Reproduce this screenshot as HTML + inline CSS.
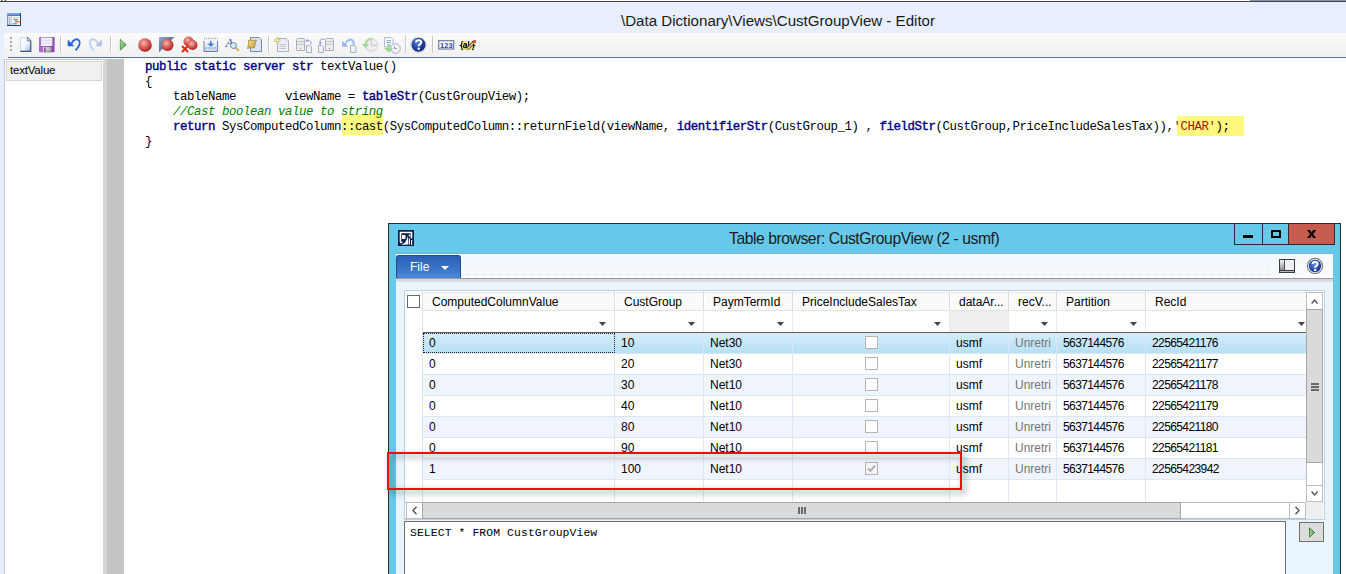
<!DOCTYPE html>
<html><head><meta charset="utf-8">
<style>
*{margin:0;padding:0;box-sizing:border-box}
html,body{width:1346px;height:574px;overflow:hidden;background:#E8EEFC;position:relative;font-family:"Liberation Sans",sans-serif}
.a{position:absolute}
.code{font-family:"Liberation Mono",monospace;font-size:12.4px;letter-spacing:-0.44px;line-height:15px;white-space:pre;color:#000}
.kw{color:#00007F;-webkit-text-stroke:0.4px #00007F}
.cm{color:#008000;font-style:italic}
.st{color:#A31515}
.hl{background:#FAF58C}
.hd{font-size:12px;color:#000;white-space:nowrap}
.td{font-size:12px;color:#000;white-space:nowrap}
.num{letter-spacing:-0.6px}
.sql{font-family:"Liberation Mono",monospace;font-size:11.4px;letter-spacing:0.1px;white-space:pre;color:#000}
</style></head><body>
<!-- top strip -->
<div class="a" style="left:0;top:0;width:1346px;height:1px;background:#fff"></div>
<div class="a" style="left:1250px;top:0;width:96px;height:1px;background:#8A90A8"></div>
<div class="a" style="left:1px;top:0;width:1px;height:1px;background:#B05A10"></div><div class="a" style="left:6px;top:0;width:1px;height:1px;background:#C0F0F8"></div><div class="a" style="left:2px;top:0;width:1px;height:1px;background:#60A8E0"></div><div class="a" style="left:4px;top:0;width:1px;height:1px;background:#F0E0A0"></div><div class="a" style="left:5px;top:0;width:1px;height:1px;background:#6A2A8A"></div>
<div class="a" style="left:0;top:1px;width:1346px;height:1px;background:#454545"></div>
<!-- title -->
<div class="a" style="left:621px;top:12px;font-size:15.1px;color:#1a1a1a;white-space:nowrap">\Data Dictionary\Views\CustGroupView - Editor</div>
<svg class="a" style="left:7px;top:13px" width="14" height="14"><defs><linearGradient id="eh" x1="0" y1="0" x2="0" y2="1"><stop offset="0" stop-color="#8AB0F0"/><stop offset="1" stop-color="#3A68CC"/></linearGradient></defs><rect x="0" y="0" width="14" height="13" fill="#2A3E6A"/><rect x="0" y="0" width="13" height="12" fill="#7C98C8"/><rect x="0.5" y="0.5" width="12.5" height="2.5" fill="url(#eh)"/><rect x="1" y="3" width="3" height="8.5" fill="#DCE4F0"/><g fill="#6A80A8"><circle cx="2.5" cy="4.8" r="0.6"/><circle cx="2.5" cy="6.8" r="0.6"/><circle cx="2.5" cy="8.8" r="0.6"/><circle cx="2.5" cy="10.8" r="0.6"/></g><rect x="4.5" y="3" width="8.5" height="9" fill="#fff"/><path d="M6 4.8 H12" stroke="#7888A8" stroke-width="0.8" stroke-dasharray="0.8 0.4"/><path d="M6.5 6.8 H11" stroke="#2A9A2A" stroke-width="1.1"/><path d="M8 8.8 H12.5" stroke="#E04014" stroke-width="1.1"/><path d="M5.5 10.8 H10" stroke="#2A8AE8" stroke-width="1.1"/></svg>
<!-- toolbar -->
<div class="a" style="left:4px;top:33px;width:1342px;height:25px;background:linear-gradient(#FBFBFB,#F0F0F0);border-top-left-radius:3px"></div>
<svg class="a" style="left:0;top:30px" width="490" height="28" viewBox="0 30 490 28">
<defs>
<radialGradient id="rb" cx="0.4" cy="0.35" r="0.68"><stop offset="0" stop-color="#F6B8B0"/><stop offset="0.45" stop-color="#DC6A64"/><stop offset="0.85" stop-color="#B83030"/><stop offset="1" stop-color="#8A1818"/></radialGradient><linearGradient id="pg" x1="0" y1="0" x2="1" y2="1"><stop offset="0" stop-color="#B8E4A8"/><stop offset="1" stop-color="#3E9A3E"/></linearGradient><linearGradient id="sq" x1="0" y1="0" x2="1" y2="1"><stop offset="0" stop-color="#98A8C4"/><stop offset="1" stop-color="#2A3E62"/></linearGradient>
<linearGradient id="doc" x1="0" y1="0" x2="1" y2="1"><stop offset="0" stop-color="#fff"/><stop offset="1" stop-color="#C9D9F0"/></linearGradient>
<linearGradient id="gry" x1="0" y1="0" x2="0" y2="1"><stop offset="0" stop-color="#F4F4F4"/><stop offset="1" stop-color="#D0D0D0"/></linearGradient>
<radialGradient id="hb" cx="0.4" cy="0.35" r="0.7"><stop offset="0" stop-color="#5C82D8"/><stop offset="0.6" stop-color="#1F3FA0"/><stop offset="1" stop-color="#0E2470"/></radialGradient>
</defs>
<!-- grip -->
<g fill="#A8A8A8"><rect x="10" y="37" width="2" height="2"/><rect x="10" y="41" width="2" height="2"/><rect x="10" y="45" width="2" height="2"/><rect x="10" y="49" width="2" height="2"/></g>
<!-- new doc -->
<defs><linearGradient id="nd" x1="0" y1="0" x2="1" y2="1"><stop offset="0" stop-color="#FFFFFF"/><stop offset="0.55" stop-color="#EEF4FE"/><stop offset="1" stop-color="#86ACEE"/></linearGradient><linearGradient id="sv" x1="0" y1="0" x2="1" y2="0"><stop offset="0" stop-color="#B070D0"/><stop offset="1" stop-color="#8E48B0"/></linearGradient><linearGradient id="sh" x1="0" y1="0" x2="1" y2="1"><stop offset="0" stop-color="#F4F4F4"/><stop offset="1" stop-color="#8A8A8A"/></linearGradient></defs>
<path d="M20 37.2 H27.5 L31 40.7 V51.8 H20 Z" fill="url(#nd)"/><path d="M20.4 51.5 V37.6 H27.5" stroke="#C4D0E0" stroke-width="0.9" fill="none"/><path d="M27.5 37.4 L30.8 40.7 V51.4 H20.4" stroke="#405274" stroke-width="1.1" fill="none"/><path d="M27.3 37.5 V40.8 H30.7" stroke="#6A7C98" stroke-width="0.9" fill="#E0E8F4"/>
<!-- save -->
<rect x="39" y="37" width="15.6" height="15.3" rx="1" fill="url(#sv)"/><rect x="41" y="37.6" width="11.3" height="8.4" fill="#F0F2F6"/><path d="M41 40.3 H52.3 M41 43 H52.3" stroke="#D4D8E0" stroke-width="0.9"/><rect x="43" y="47.2" width="8" height="5.1" fill="url(#sh)"/><rect x="44" y="47.6" width="1.6" height="4.5" fill="#8E48B0"/>
<!-- sep -->
<rect x="60" y="36" width="1" height="17" fill="#C8C8C8"/><rect x="61" y="36" width="1" height="17" fill="#fff"/>
<!-- undo -->
<path d="M71.5 43.8 C73 39.5, 77 38, 79 40.5 C80.6 42.6, 79.6 46.6, 75.5 50.3" stroke="#2D68D8" stroke-width="1.9" fill="none"/><path d="M67.7 39.6 L67.7 46.2 L74.3 46.2 Z" fill="#2A62D0"/>
<path d="M98 43.8 C96.5 39.5, 92.5 38, 90.5 40.5 C88.9 42.6, 89.9 46.6, 94 50.3" stroke="#BCD0F0" stroke-width="1.9" fill="none"/><path d="M101.8 39.6 L101.8 46.2 L95.2 46.2 Z" fill="#B0C4E8"/>
<!-- sep -->
<rect x="110" y="36" width="1" height="17" fill="#C8C8C8"/><rect x="111" y="36" width="1" height="17" fill="#fff"/>
<!-- play -->
<path d="M120.3 39.3 L126.2 44.7 L120.3 50.2 Z" fill="url(#pg)" stroke="#3A7A3A" stroke-width="0.7"/>
<!-- red ball -->
<circle cx="145" cy="45" r="6.8" fill="url(#rb)"/>
<!-- square+ball -->
<path d="M159 37 H174.5 L159 52.3 Z" fill="url(#sq)"/><circle cx="167.5" cy="45" r="6" fill="url(#rb)"/>
<!-- two balls + x -->
<circle cx="188.5" cy="41.5" r="5" fill="url(#rb)"/><circle cx="192.5" cy="45" r="5" fill="url(#rb)"/><path d="M182 46 L188 52 M188 46 L182 52" stroke="#F02010" stroke-width="2"/>
<!-- insert table -->
<defs><linearGradient id="itb" x1="0" y1="0" x2="0" y2="1"><stop offset="0" stop-color="#F4F8FE"/><stop offset="1" stop-color="#C4D4EC"/></linearGradient><linearGradient id="scr" x1="0" y1="0" x2="1" y2="1"><stop offset="0" stop-color="#F8E8A0"/><stop offset="1" stop-color="#C0982A"/></linearGradient></defs>
<path d="M204 41 V51.5 H217.5 V41" fill="url(#itb)" stroke="#6E7E9C"/><path d="M204 38.5 H218" stroke="#9AA4B8" stroke-width="1.6" stroke-dasharray="1 1.2"/><path d="M205.5 48 H216.5" stroke="#7888A8" stroke-width="1.2" stroke-dasharray="1.6 1.4"/><path d="M210.8 41 V44" stroke="#3A78E0" stroke-width="1.4"/><path d="M207.3 43.5 H214.3 L210.8 46.8 Z" fill="#3A78E0"/>
<!-- find A -->
<text x="225.5" y="46.5" font-family="Liberation Serif" font-style="italic" font-size="12.5" fill="#2E4EB0">A</text><path d="M235.5 47.5 L238.8 51" stroke="#C8A848" stroke-width="1.8"/><circle cx="233.5" cy="45.5" r="3" fill="#D4EAF8" stroke="#5A88B8" stroke-width="1"/>
<!-- scroll doc -->
<path d="M250.5 37.5 H259 L261.5 40 V51.5 H250.5 Z" fill="#DCE6F6" stroke="#7888A8"/><path d="M248.5 40.5 C251 39.5, 253 41, 256.5 40 C255.5 42, 255 44, 254.5 47.5 C252 48.5, 250 47, 247.5 48.5 C248.5 46, 248.5 43, 248.5 40.5 Z" fill="url(#scr)" stroke="#9A7A20" stroke-width="0.7"/>
<!-- sep -->
<rect x="268" y="36" width="1" height="17" fill="#C8C8C8"/><rect x="269" y="36" width="1" height="17" fill="#fff"/>
<!-- add doc disabled -->
<path d="M277.5 38.5 H286 L288.5 41 V51.5 H277.5 Z" fill="#EFF1F6" stroke="#A8B2C4"/><path d="M286 38.5 V41 H288.5" fill="#fff" stroke="#B8C0D0" stroke-width="0.7"/><path d="M279.5 44.5 H286 M279.5 46.5 H286 M279.5 48.5 H286" stroke="#B0B8C8" stroke-width="0.8"/><path d="M277.3 37.5 V43.5 M274.3 40.5 H280.3" stroke="#A8A8A0" stroke-width="2.6"/><path d="M277.3 37.8 V43.2 M274.6 40.5 H280" stroke="#F4EE80" stroke-width="1.6"/>
<!-- server/doc -->
<path d="M296.5 39.5 L297.5 38.5 H304 L304.5 39.5 V50.5 H296.5 Z" fill="#ECEEF2" stroke="#A8B0BC"/><path d="M297 41.5 H304 M297 44.3 H304" stroke="#B8B8B8" stroke-width="0.8"/><rect x="300" y="48" width="1" height="1" fill="#F06060"/><path d="M306.5 45.5 H310 L311.5 47 V52.5 H306.5 Z" fill="#F0F2F8" stroke="#A8B0BC"/><path d="M311 44.5 V42.5 C311 41, 309 40.5, 307 40.5" stroke="#9A90D0" stroke-width="1" fill="none"/><path d="M305.5 40.5 L307.8 38.8 V42.2 Z" fill="#9A90D0"/>
<path d="M318.5 45.5 H322 L323.5 47 V52.5 H318.5 Z" fill="#F0F2F8" stroke="#A8B0BC"/><path d="M324.5 39.2 H322 C320.8 39.2, 320.2 40, 320.2 41.5 V43" stroke="#9A90D0" stroke-width="1" fill="none"/><path d="M318.5 42.5 H322 L320.2 45 Z" fill="#9A90D0"/><path d="M325.5 39.5 L326.5 38.5 H333 L333.5 39.5 V50.5 H325.5 Z" fill="#ECEEF2" stroke="#A8B0BC"/><path d="M326 41.5 H333 M326 44.3 H333" stroke="#B8B8B8" stroke-width="0.8"/><rect x="329" y="48" width="1" height="1" fill="#F06060"/>
<!-- undo doc -->
<path d="M345 45 C346 40.5, 350 38.5, 352.5 40.5 C354 41.8, 354 43.5, 353.5 45" stroke="#A8C0EC" stroke-width="2.2" fill="none"/><path d="M342.2 40.8 L342.2 46.8 L348.2 46.8 Z" fill="#98B4E8"/><path d="M350.5 45.5 H354.5 L356 47 V52.5 H350.5 Z" fill="#EEF2FA" stroke="#A8B0BC"/>
<!-- clock green -->
<circle cx="371.3" cy="45" r="6.3" fill="#EDEDED" stroke="#D0D0D0"/><path d="M371.3 39.8 V45.2 H376" stroke="#C4C4C4" stroke-width="0.9" fill="none"/><path d="M372.5 38.6 C368.5 38.6, 366 41, 365.5 44.5" stroke="#A8E0A0" stroke-width="2.4" fill="none"/><path d="M362 44 L369 44 L365.5 48 Z" fill="#98D890"/>
<!-- doc clock -->
<path d="M384.5 37.5 H391 L393 39.5 V47 H384.5 Z" fill="#F6F8FC" stroke="#B4BCCC"/><path d="M386.5 40.5 H391 M386.5 42.5 H391" stroke="#7AA0E0" stroke-width="0.9"/><circle cx="395.5" cy="48.5" r="4.8" fill="#F2F2FA" stroke="#B0A8D8"/><path d="M394.5 46 V48.5 H397" stroke="#9088B8" fill="none" stroke-width="0.9"/><rect x="387.2" y="44" width="3.6" height="4.5" fill="#A8D8A0"/><path d="M384 48 H393.5 L388.8 52.5 Z" fill="#A0D498"/>
<!-- sep -->
<rect x="405" y="36" width="1" height="17" fill="#C8C8C8"/><rect x="406" y="36" width="1" height="17" fill="#fff"/>
<!-- help -->
<circle cx="418.5" cy="44.7" r="7.6" fill="none" stroke="#A8A8A8" stroke-width="1" stroke-dasharray="1 1"/><circle cx="418.5" cy="44.7" r="7" fill="url(#hb)"/><path d="M416 42.2 C416 39.5, 421.3 39.5, 421.3 42.2 C421.3 44, 418.7 44.3, 418.7 46.3" stroke="#fff" stroke-width="2" fill="none"/><rect x="417.6" y="47.6" width="2.2" height="2.2" fill="#fff"/>
<!-- sep -->
<rect x="432" y="36" width="1" height="17" fill="#C8C8C8"/><rect x="433" y="36" width="1" height="17" fill="#fff"/>
<!-- 123 -->
<rect x="438.7" y="40.7" width="15" height="8.3" fill="#fff" stroke="#7A84A8" stroke-width="1.3"/><text x="446.3" y="47.6" font-family="Liberation Sans" font-weight="bold" font-size="7.6" fill="#2848B0" text-anchor="middle">123</text>
<!-- {ab} pencil -->
<rect x="461.5" y="41" width="11.5" height="9" fill="#EEEA64"/><g stroke="#111" stroke-width="1.1" fill="none"><path d="M462.9 41.2 C461.7 41.2, 461.6 42, 461.6 43.4 V44.8 L460.3 45.5 L461.6 46.2 V47.6 C461.6 49, 461.7 49.8, 462.9 49.8"/><path d="M472.1 41.2 C473.3 41.2, 473.4 42, 473.4 43.4 V44.8 L474.7 45.5 L473.4 46.2 V47.6 C473.4 49, 473.3 49.8, 472.1 49.8"/><path d="M463.7 43.6 H465.6 C466.4 43.6, 466.6 44.2, 466.6 45 V47.8"/><ellipse cx="464.9" cy="46.3" rx="1.5" ry="1.3"/><path d="M468.6 41 V47.8"/></g><path d="M466.9 49.2 L473.4 42.7" stroke="#2A2A20" stroke-width="3"/><path d="M466.9 49.2 L473.4 42.7" stroke="#EED888" stroke-width="1.5"/><path d="M465.8 50.2 L467.2 48.6" stroke="#C8C8D8" stroke-width="1.2"/><circle cx="474.6" cy="41.6" r="1.8" fill="#D25844"/>
</svg>

<div class="a" style="left:8px;top:57px;width:1338px;height:1px;background:#5A6EA0"></div>
<!-- left panel -->
<div class="a" style="left:4px;top:58px;width:1342px;height:1px;background:#F7F6F0"></div>
<div class="a" style="left:4px;top:59px;width:99px;height:515px;background:#fff;border-left:1px solid #C8C8C8;border-top:1px solid #C8C8C8"></div>
<div class="a" style="left:6px;top:61px;width:96px;height:20px;background:#F0F0F0;border:1px solid #D4D4D4"></div>
<div class="a" style="left:10px;top:64px;font-size:11.5px;letter-spacing:-0.2px;color:#000">textValue</div>
<div class="a" style="left:103px;top:59px;width:4px;height:515px;background:#D4D4D4"></div>
<div class="a" style="left:107px;top:59px;width:17px;height:515px;background:#C4C4C4"></div>
<div class="a" style="left:124px;top:58px;width:1222px;height:516px;background:#fff"></div>
<!-- code -->
<div class="a" style="left:342px;top:114px;width:41px;height:21px;background:#FFF980"></div>
<div class="a" style="left:1177px;top:116px;width:67px;height:20px;background:#FFF980"></div>
<div class="a code" style="left:145px;top:60px"><span class="kw">public static server str</span> textValue()
{
    tableName       viewName = <span class="kw">tableStr</span>(CustGroupView);
    <span class="cm">//Cast boolean value to string</span>
    <span class="kw">return</span> SysComputedColumn::cast(SysComputedColumn::returnField(viewName, <span class="kw">identifierStr</span>(CustGroup_1) , <span class="kw">fieldStr</span>(CustGroup,PriceIncludeSalesTax)),<span class="st">'CHAR'</span>);
}</div>
<div class="a" style="left:388px;top:223px;width:953px;height:360px;background:#66C9EA;border:1px solid #2B2B2B"></div>
<div class="a" style="left:729px;top:230px;font-size:15.7px;letter-spacing:-0.44px;color:#1b1b1b;white-space:nowrap">Table browser: CustGroupView (2 - usmf)</div>
<div class="a" style="left:1234px;top:224px;width:101px;height:21px;border:1px solid #2B2B2B;border-top:none;background:#66C9EA"></div>
<div class="a" style="left:1262px;top:223px;width:1px;height:21px;background:#2B2B2B"></div>
<div class="a" style="left:1288px;top:223px;width:1px;height:21px;background:#2B2B2B"></div>
<div class="a" style="left:1289px;top:224px;width:45px;height:20px;background:#C75B50"></div>
<div class="a" style="left:1243px;top:235px;width:10px;height:3px;background:#000"></div>
<div class="a" style="left:1271px;top:230px;width:10px;height:8px;border:2px solid #000"></div>
<svg class="a" style="left:1307px;top:230px" width="10" height="8"><path d="M0 0 H3 L4.6 2.6 L6.2 0 H9.2 L6.1 4 L9.2 8 H6.2 L4.6 5.4 L3 8 H0 L3.1 4 Z" fill="#000"/></svg>
<svg class="a" style="left:398px;top:230px" width="16" height="16"><rect width="16" height="16" fill="#061A4C"/><path d="M2.5 12 V2.5 H13.5 V8.5" stroke="#fff" stroke-width="1.6" fill="none"/><path d="M2 12.5 H4.5" stroke="#fff" stroke-width="1.4"/><rect x="4" y="5" width="3.5" height="4" fill="#fff"/><path d="M3 15 C6 14, 8.5 12, 10 5.5 L10.5 14.5 Z" fill="#fff"/><rect x="11" y="8.5" width="1" height="6" fill="#fff"/><rect x="13" y="10" width="1.2" height="5" fill="#fff"/><circle cx="11.5" cy="5.5" r="0.9" fill="#fff"/></svg>
<div class="a" style="left:396px;top:254px;width:937px;height:320px;background:#EAF4FC"></div>
<div class="a" style="left:396px;top:253px;width:937px;height:1px;background:#7FAFCB"></div>
<div class="a" style="left:396px;top:254px;width:937px;height:24px;background:linear-gradient(#F2F8FE,#FBFDFF)"></div>
<div class="a" style="left:461px;top:256px;width:810px;height:20px;background:conic-gradient(#E4F1FC 25%,#FFFFFF 0 50%,#E4F1FC 0 75%,#FFFFFF 0) 0 0/2px 2px;opacity:0.8"></div>
<div class="a" style="left:396px;top:278px;width:937px;height:1px;background:#9A9A9A"></div>
<div class="a" style="left:396px;top:279px;width:937px;height:3px;background:linear-gradient(#D6DADE,#DCE0E6)"></div>
<div class="a" style="left:396px;top:255px;width:65px;height:23px;background:linear-gradient(#2D5FB4,#3B74C8 60%,#4C8ADC);border:1px solid #1E4B9A;border-bottom:none;border-radius:3px 3px 0 0"></div>
<div class="a" style="left:410px;top:260px;font-size:12px;letter-spacing:0px;color:#fff">File</div>
<svg class="a" style="left:441px;top:266px" width="9" height="5"><path d="M0 0 H8 L4 4 Z" fill="#fff"/></svg>
<div class="a" style="left:1279px;top:259px;width:16px;height:14px;border:1px solid #3C4046;background:#F0F0F0"></div>
<div class="a" style="left:1280px;top:260px;width:4px;height:10px;background:linear-gradient(#F4F4F4,#8E9094)"></div><div class="a" style="left:1284px;top:260px;width:1px;height:10px;background:#4A4E54"></div>
<div class="a" style="left:1280px;top:270px;width:14px;height:2px;background:#B4B8BC;border-top:1px solid #3C4046"></div>
<svg class="a" style="left:1306px;top:257px" width="18" height="18"><defs><radialGradient id="hb2" cx="0.45" cy="0.4" r="0.7"><stop offset="0" stop-color="#6A90E0"/><stop offset="0.6" stop-color="#2446B0"/><stop offset="1" stop-color="#10287A"/></radialGradient></defs><circle cx="9" cy="9" r="7.6" fill="#fff" stroke="#7A7A7A" stroke-width="1.2"/><circle cx="9" cy="9" r="6.2" fill="url(#hb2)"/><path d="M6.6 6.9 C6.6 4.3, 11.6 4.3, 11.6 6.9 C11.6 8.7, 9.2 8.9, 9.2 10.8" stroke="#fff" stroke-width="2" fill="none"/><rect x="8.1" y="11.9" width="2.2" height="2.2" fill="#fff"/></svg>
<div class="a" style="left:404px;top:290px;width:921px;height:230px;background:#fff;border:1px solid #BCD0E8"></div>
<div class="a" style="left:405px;top:291px;width:17px;height:211px;background:#FFFFFF"></div>
<div class="a" style="left:422px;top:291px;width:1px;height:211px;background:#D8E3F0"></div>
<div class="a" style="left:407px;top:295px;width:13px;height:13px;border:1px solid #6A6A6A;background:#fff"></div>
<div class="a" style="left:422px;top:292px;width:884px;height:18px;background:#FAFAFA;border-top:1px solid #E6E6E6;border-left:1px solid #E0E0E0"></div>
<div class="a" style="left:423px;top:310px;width:883px;height:1px;background:#E4E4E4"></div>
<div class="a" style="left:423px;top:311px;width:883px;height:21px;background:#fff"></div>
<div class="a" style="left:950px;top:311px;width:58px;height:21px;background:#EEEEEE"></div>
<div class="a" style="left:423px;top:332px;width:883px;height:1px;background:#5E5E5E"></div>
<div class="a" style="left:423px;top:333px;width:883px;height:20px;background:linear-gradient(#D5EDFA,#B6E0F6)"></div>
<div class="a" style="left:423px;top:353px;width:883px;height:1px;background:#DDE7F4"></div>
<div class="a" style="left:423px;top:354px;width:883px;height:20px;background:#fff"></div>
<div class="a" style="left:423px;top:374px;width:883px;height:1px;background:#DDE7F4"></div>
<div class="a" style="left:423px;top:375px;width:883px;height:20px;background:#F0F5FD"></div>
<div class="a" style="left:423px;top:395px;width:883px;height:1px;background:#DDE7F4"></div>
<div class="a" style="left:423px;top:396px;width:883px;height:20px;background:#fff"></div>
<div class="a" style="left:423px;top:416px;width:883px;height:1px;background:#DDE7F4"></div>
<div class="a" style="left:423px;top:417px;width:883px;height:20px;background:#F0F5FD"></div>
<div class="a" style="left:423px;top:437px;width:883px;height:1px;background:#DDE7F4"></div>
<div class="a" style="left:423px;top:438px;width:883px;height:20px;background:#fff"></div>
<div class="a" style="left:423px;top:458px;width:883px;height:1px;background:#DDE7F4"></div>
<div class="a" style="left:423px;top:459px;width:883px;height:20px;background:#F0F5FD"></div>
<div class="a" style="left:423px;top:479px;width:883px;height:1px;background:#DDE7F4"></div>
<div class="a" style="left:423px;top:480px;width:883px;height:20px;background:#fff"></div>

<div class="a" style="left:614px;top:291px;width:1px;height:19px;background:#DCDCDC"></div>
<div class="a" style="left:615px;top:291px;width:1px;height:19px;background:#FFFFFF"></div>
<div class="a" style="left:614px;top:311px;width:1px;height:21px;background:#EAEAEA"></div>
<div class="a" style="left:614px;top:333px;width:1px;height:169px;background:#DDE7F4"></div>
<div class="a" style="left:703px;top:291px;width:1px;height:19px;background:#DCDCDC"></div>
<div class="a" style="left:704px;top:291px;width:1px;height:19px;background:#FFFFFF"></div>
<div class="a" style="left:703px;top:311px;width:1px;height:21px;background:#EAEAEA"></div>
<div class="a" style="left:703px;top:333px;width:1px;height:169px;background:#DDE7F4"></div>
<div class="a" style="left:792px;top:291px;width:1px;height:19px;background:#DCDCDC"></div>
<div class="a" style="left:793px;top:291px;width:1px;height:19px;background:#FFFFFF"></div>
<div class="a" style="left:792px;top:311px;width:1px;height:21px;background:#EAEAEA"></div>
<div class="a" style="left:792px;top:333px;width:1px;height:169px;background:#DDE7F4"></div>
<div class="a" style="left:949px;top:291px;width:1px;height:19px;background:#DCDCDC"></div>
<div class="a" style="left:950px;top:291px;width:1px;height:19px;background:#FFFFFF"></div>
<div class="a" style="left:949px;top:311px;width:1px;height:21px;background:#EAEAEA"></div>
<div class="a" style="left:949px;top:333px;width:1px;height:169px;background:#DDE7F4"></div>
<div class="a" style="left:1008px;top:291px;width:1px;height:19px;background:#DCDCDC"></div>
<div class="a" style="left:1009px;top:291px;width:1px;height:19px;background:#FFFFFF"></div>
<div class="a" style="left:1008px;top:311px;width:1px;height:21px;background:#EAEAEA"></div>
<div class="a" style="left:1008px;top:333px;width:1px;height:169px;background:#DDE7F4"></div>
<div class="a" style="left:1056px;top:291px;width:1px;height:19px;background:#DCDCDC"></div>
<div class="a" style="left:1057px;top:291px;width:1px;height:19px;background:#FFFFFF"></div>
<div class="a" style="left:1056px;top:311px;width:1px;height:21px;background:#EAEAEA"></div>
<div class="a" style="left:1056px;top:333px;width:1px;height:169px;background:#DDE7F4"></div>
<div class="a" style="left:1145px;top:291px;width:1px;height:19px;background:#DCDCDC"></div>
<div class="a" style="left:1146px;top:291px;width:1px;height:19px;background:#FFFFFF"></div>
<div class="a" style="left:1145px;top:311px;width:1px;height:21px;background:#EAEAEA"></div>
<div class="a" style="left:1145px;top:333px;width:1px;height:169px;background:#DDE7F4"></div>
<div class="a hd" style="left:432px;top:295px">ComputedColumnValue</div>
<div class="a hd" style="left:624px;top:295px">CustGroup</div>
<div class="a hd" style="left:713px;top:295px">PaymTermId</div>
<div class="a hd" style="left:802px;top:295px">PriceIncludeSalesTax</div>
<div class="a hd" style="left:959px;top:295px">dataAr...</div>
<div class="a hd" style="left:1018px;top:295px">recV...</div>
<div class="a hd" style="left:1066px;top:295px">Partition</div>
<div class="a hd" style="left:1155px;top:295px">RecId</div>
<svg class="a" style="left:599px;top:322px" width="7" height="4"><path d="M0 0 H7 L3.5 4 Z" fill="#444"/></svg>
<svg class="a" style="left:688px;top:322px" width="7" height="4"><path d="M0 0 H7 L3.5 4 Z" fill="#444"/></svg>
<svg class="a" style="left:777px;top:322px" width="7" height="4"><path d="M0 0 H7 L3.5 4 Z" fill="#444"/></svg>
<svg class="a" style="left:934px;top:322px" width="7" height="4"><path d="M0 0 H7 L3.5 4 Z" fill="#444"/></svg>
<svg class="a" style="left:1041px;top:322px" width="7" height="4"><path d="M0 0 H7 L3.5 4 Z" fill="#444"/></svg>
<svg class="a" style="left:1130px;top:322px" width="7" height="4"><path d="M0 0 H7 L3.5 4 Z" fill="#444"/></svg>
<svg class="a" style="left:1298px;top:322px" width="7" height="4"><path d="M0 0 H7 L3.5 4 Z" fill="#444"/></svg>
<div class="a td" style="left:429px;top:336px">0</div>
<div class="a td" style="left:621px;top:336px">10</div>
<div class="a td" style="left:710px;top:336px">Net30</div>
<div class="a td" style="left:956px;top:336px">usmf</div>
<div class="a td" style="left:1015px;top:336px;color:#767676">Unretri</div>
<div class="a td num" style="left:1063px;top:336px">5637144576</div>
<div class="a td num" style="left:1152px;top:336px">22565421176</div>
<div class="a" style="left:865px;top:336px;width:13px;height:13px;border:1px solid #B4B4B4;background:#fff"></div>
<div class="a td" style="left:429px;top:357px">0</div>
<div class="a td" style="left:621px;top:357px">20</div>
<div class="a td" style="left:710px;top:357px">Net30</div>
<div class="a td" style="left:956px;top:357px">usmf</div>
<div class="a td" style="left:1015px;top:357px;color:#767676">Unretri</div>
<div class="a td num" style="left:1063px;top:357px">5637144576</div>
<div class="a td num" style="left:1152px;top:357px">22565421177</div>
<div class="a" style="left:865px;top:357px;width:13px;height:13px;border:1px solid #B4B4B4;background:#fff"></div>
<div class="a td" style="left:429px;top:378px">0</div>
<div class="a td" style="left:621px;top:378px">30</div>
<div class="a td" style="left:710px;top:378px">Net10</div>
<div class="a td" style="left:956px;top:378px">usmf</div>
<div class="a td" style="left:1015px;top:378px;color:#767676">Unretri</div>
<div class="a td num" style="left:1063px;top:378px">5637144576</div>
<div class="a td num" style="left:1152px;top:378px">22565421178</div>
<div class="a" style="left:865px;top:378px;width:13px;height:13px;border:1px solid #B4B4B4;background:#fff"></div>
<div class="a td" style="left:429px;top:399px">0</div>
<div class="a td" style="left:621px;top:399px">40</div>
<div class="a td" style="left:710px;top:399px">Net10</div>
<div class="a td" style="left:956px;top:399px">usmf</div>
<div class="a td" style="left:1015px;top:399px;color:#767676">Unretri</div>
<div class="a td num" style="left:1063px;top:399px">5637144576</div>
<div class="a td num" style="left:1152px;top:399px">22565421179</div>
<div class="a" style="left:865px;top:399px;width:13px;height:13px;border:1px solid #B4B4B4;background:#fff"></div>
<div class="a td" style="left:429px;top:420px">0</div>
<div class="a td" style="left:621px;top:420px">80</div>
<div class="a td" style="left:710px;top:420px">Net10</div>
<div class="a td" style="left:956px;top:420px">usmf</div>
<div class="a td" style="left:1015px;top:420px;color:#767676">Unretri</div>
<div class="a td num" style="left:1063px;top:420px">5637144576</div>
<div class="a td num" style="left:1152px;top:420px">22565421180</div>
<div class="a" style="left:865px;top:420px;width:13px;height:13px;border:1px solid #B4B4B4;background:#fff"></div>
<div class="a td" style="left:429px;top:441px">0</div>
<div class="a td" style="left:621px;top:441px">90</div>
<div class="a td" style="left:710px;top:441px">Net10</div>
<div class="a td" style="left:956px;top:441px">usmf</div>
<div class="a td" style="left:1015px;top:441px;color:#767676">Unretri</div>
<div class="a td num" style="left:1063px;top:441px">5637144576</div>
<div class="a td num" style="left:1152px;top:441px">22565421181</div>
<div class="a" style="left:865px;top:441px;width:13px;height:13px;border:1px solid #B4B4B4;background:#fff"></div>
<div class="a td" style="left:429px;top:462px">1</div>
<div class="a td" style="left:621px;top:462px">100</div>
<div class="a td" style="left:710px;top:462px">Net10</div>
<div class="a td" style="left:956px;top:462px">usmf</div>
<div class="a td" style="left:1015px;top:462px;color:#767676">Unretri</div>
<div class="a td num" style="left:1063px;top:462px">5637144576</div>
<div class="a td num" style="left:1152px;top:462px">22565423942</div>
<div class="a" style="left:865px;top:462px;width:13px;height:13px;border:1px solid #B4B4B4;background:#F4F4F4"><svg width="11" height="11" style="position:absolute;left:0;top:0"><path d="M2 5.5 L4.5 8 L9 2.5" stroke="#A8A8A8" stroke-width="1.8" fill="none"/></svg></div>
<div class="a" style="left:423px;top:333px;width:192px;height:20px;border:1px dotted #222"></div>
<div class="a" style="left:1306px;top:292px;width:17px;height:210px;background:#fff;border-left:1px solid #BDBDBD;border-right:1px solid #BDBDBD;border-top:1px solid #BDBDBD"></div>
<svg class="a" style="left:1311px;top:298px" width="8" height="7"><path d="M0.6 5.5 L3.6 2 L6.6 5.5" stroke="#4E4E4E" stroke-width="1.3" fill="none"/></svg>
<div class="a" style="left:1306px;top:309px;width:17px;height:154px;background:#DADADA;border:1px solid #A6A6A6"></div>
<div class="a" style="left:1311px;top:383px;width:8px;height:1.5px;background:#6A6A6A;box-shadow:0 3px 0 #6A6A6A,0 6px 0 #6A6A6A"></div>
<div class="a" style="left:1306px;top:485px;width:17px;height:1px;background:#BDBDBD"></div>
<div class="a" style="left:1306px;top:501px;width:17px;height:1px;background:#BDBDBD"></div>
<svg class="a" style="left:1311px;top:490px" width="8" height="7"><path d="M0.6 1.5 L3.6 5 L6.6 1.5" stroke="#4E4E4E" stroke-width="1.3" fill="none"/></svg>
<div class="a" style="left:405px;top:502px;width:901px;height:17px;background:#fff;border-top:1px solid #BDBDBD;border-bottom:1px solid #BDBDBD"></div>
<div class="a" style="left:406px;top:502px;width:1px;height:17px;background:#BDBDBD"></div>
<svg class="a" style="left:411px;top:506px" width="7" height="9"><path d="M5.5 0.8 L2 4.5 L5.5 8.2" stroke="#4E4E4E" stroke-width="1.3" fill="none"/></svg>
<div class="a" style="left:422px;top:502px;width:759px;height:17px;background:#DADADA;border:1px solid #A6A6A6"></div>
<div class="a" style="left:798px;top:507px;width:1.5px;height:7px;background:#6A6A6A;box-shadow:3px 0 0 #6A6A6A,6px 0 0 #6A6A6A"></div>
<div class="a" style="left:1289px;top:502px;width:17px;height:17px;border:1px solid #BDBDBD;background:#fff"></div>
<svg class="a" style="left:1294px;top:506px" width="7" height="9"><path d="M1.5 0.8 L5 4.5 L1.5 8.2" stroke="#4E4E4E" stroke-width="1.3" fill="none"/></svg>
<div class="a" style="left:1306px;top:502px;width:17px;height:17px;background:#EFEFEF"></div>
<div class="a" style="left:404px;top:521px;width:882px;height:60px;background:#fff;border:1px solid #6E6E6E"></div>
<div class="a sql" style="left:410px;top:527px">SELECT * FROM CustGroupView</div>
<div class="a" style="left:1299px;top:522px;width:25px;height:20px;background:#DCDCDC;border:1px solid #707070"><svg width="23" height="18" style="position:absolute;left:0;top:0"><defs><linearGradient id="eg" x1="0" y1="0" x2="1" y2="0"><stop offset="0" stop-color="#A8E098"/><stop offset="1" stop-color="#3C9A3C"/></linearGradient></defs><path d="M9.5 4.8 L14.5 9.5 L9.5 14.2 Z" fill="url(#eg)" stroke="#2E6A2E" stroke-width="0.8"/></svg></div>
<div class="a" style="left:387px;top:452px;width:575px;height:38px;border:2px solid #F50A0A;filter:drop-shadow(3px 3px 3px rgba(0,0,0,0.5))"></div>
</body></html>
